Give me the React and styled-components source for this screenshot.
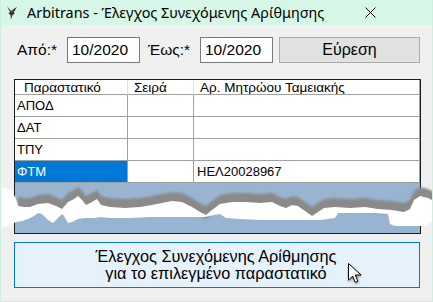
import React from "react";
import styled, { createGlobalStyle } from "styled-components";

const Global = createGlobalStyle`
  html, body { margin: 0; padding: 0; background: #f0f0f0; }
  body { width: 433px; height: 302px; overflow: hidden; }
  * { box-sizing: border-box; }
`;

const Window = styled.div`
  position: relative;
  width: 433px;
  height: 302px;
  background: #f0f0f0;
  border-left: 1px solid #c9f1dd;
  border-right: 1px solid #c9f1dd;
  border-bottom: 1px solid #c9f1dd;
  display: flex;
  flex-direction: column;
  overflow: hidden;
  font-family: "Liberation Sans", Arial, sans-serif;
  color: #000;
`;

const TitleBar = styled.div`
  height: 25px;
  flex: none;
  background: #d6f7e7;
  display: flex;
  align-items: center;
  padding-left: 6px;
`;

const TitleText = styled.span`
  margin-left: 9px;
  flex: 1;
  font-family: "Noto Sans", sans-serif;
  font-size: 14.4px;
  white-space: nowrap;
`;

const CloseIcon = styled.svg`
  flex: none;
  margin-right: 56px;
`;

const Body = styled.div`
  padding: 0 11px 0 13px;
  display: flex;
  flex-direction: column;
`;

const FilterRow = styled.div`
  margin-top: 12px;
  height: 26px;
  display: flex;
  align-items: center;
`;

const Label = styled.span`
  width: ${(p) => p.$w}px;
  margin-left: ${(p) => p.$ml}px;
  font-size: 15.5px;
  white-space: nowrap;
`;

const DateBox = styled.div`
  width: 73px;
  height: 26px;
  border: 1px solid #7a7a7a;
  background: #fff;
  font-size: 15.5px;
  padding-left: 4px;
  display: flex;
  align-items: center;
`;

const SearchButton = styled.div`
  margin-left: 6px;
  width: 141px;
  height: 26px;
  background: #e1e1e1;
  border: 1px solid #adadad;
  font-size: 16px;
  display: flex;
  align-items: center;
  justify-content: center;
`;

const Grid = styled.div`
  margin-top: 16px;
  width: 407px;
  height: 155px;
  border: 1px solid #1c1c1c;
  background: #99b4d1;
  display: flex;
  flex-direction: column;
`;

const GridRow = styled.div`
  display: grid;
  grid-template-columns: 113px 66px 226px;
  height: ${(p) => (p.$header ? 15 : 22)}px;
  background: #fff;
  font-size: 13.5px;
`;

const HeadCell = styled.div`
  border-right: 1px solid #e3e3e3;
  border-bottom: 1px solid #a0a0a0;
  padding-left: ${(p) => p.$pl}px;
  display: flex;
  align-items: center;
  white-space: nowrap;
  overflow: hidden;
  &:last-child { border-right-color: #a0a0a0; }
`;

const Cell = styled.div`
  border-right: 1px solid #a0a0a0;
  border-bottom: 1px solid #a0a0a0;
  padding-left: ${(p) => p.$pl}px;
  display: flex;
  align-items: center;
  white-space: nowrap;
  font-size: 13px;
  background: ${(p) => (p.$sel ? "#0078d7" : "#fff")};
  color: ${(p) => (p.$sel ? "#fff" : "#000")};
`;

const CheckButton = styled.div`
  margin-top: 8px;
  width: 406px;
  height: 46px;
  background: #e5f1fb;
  border: 1px solid #0078d7;
  font-size: 16.3px;
  line-height: 17px;
  text-align: center;
  display: flex;
  flex-direction: column;
  align-items: center;
  justify-content: center;
  padding-right: 2px;
`;

const TearOverlay = styled.svg`
  position: absolute;
  left: -1px;
  top: 0;
  pointer-events: none;
`;

const CursorOverlay = styled.svg`
  position: absolute;
  left: 343px;
  top: 260px;
  pointer-events: none;
`;

const rows = [
  { a: "ΑΠΟΔ", b: "", c: "" },
  { a: "ΔΑΤ", b: "", c: "" },
  { a: "ΤΠΥ", b: "", c: "" },
  { a: "ΦΤΜ", b: "", c: "ΗΕΛ20028967", sel: true },
];

const top = [
  [18, 197], [24, 198], [30, 198], [38, 195], [48, 194], [56, 197], [62, 200], [68, 193],
  [74, 190], [78, 187], [82, 191], [86, 196], [92, 193], [97, 190], [101, 196], [110, 198],
  [125, 199], [140, 198], [152, 196], [162, 194], [172, 192], [182, 193], [192, 198],
  [200, 203], [206, 206], [212, 201], [220, 195], [232, 193], [246, 193], [260, 194],
  [272, 193], [280, 197], [286, 199], [292, 196], [298, 197], [305, 202], [312, 207],
  [318, 203], [324, 199], [335, 198], [350, 199], [365, 198], [378, 200], [392, 201],
  [404, 203], [410, 200], [414, 191], [420, 187], [428, 189], [434, 192],
];

const bottom = [
  [434, 220], [425, 226], [410, 226], [395, 226], [390, 224], [388, 214], [375, 213],
  [360, 213], [345, 213], [338, 213], [335, 218], [320, 220], [300, 220], [280, 220],
  [260, 220], [240, 219], [226, 218], [220, 214], [214, 215], [205, 217], [190, 217],
  [170, 217], [150, 217], [130, 218], [110, 218], [100, 217], [95, 218], [85, 218],
  [78, 219], [72, 222], [68, 223], [64, 216], [62, 214], [58, 218], [53, 223], [48, 220],
  [42, 214], [38, 213], [34, 216], [28, 219], [22, 221], [16, 222], [12, 224], [6, 226],
  [0, 227],
];

const pts = (arr, dy = 0) => arr.map(([x, y]) => `${x},${y + dy}`).join(" L");

const greyPath = `M${pts(top)} L${pts([...top].reverse(), 13)} Z`;
const whitePath = `M0,187 L6,188 L12,191 L16,199 L${pts(top, 9)} L${pts(bottom)} Z`;

export default function App() {
  return (
    <>
      <Global />
      <Window>
        <TitleBar>
          <svg width="11" height="14" viewBox="0 0 11 14">
            <path
              d="M0,0 L4,5 L5,4 L10,1 L7,6 L7.5,8 L5.5,9 L4,13.5 L3.5,9 L1.5,7.5 L3,6 Z"
              fill="#3f3430"
            />
            <path d="M4,5 L5,4 L6.5,5 L5,6 Z" fill="#8a7a6a" />
          </svg>
          <TitleText>Arbitrans - Έλεγχος Συνεχόμενης Αρίθμησης</TitleText>
          <CloseIcon width="11" height="11" viewBox="0 0 11 11">
            <path d="M0.5,0.5 L10.5,10.5 M10.5,0.5 L0.5,10.5" stroke="#000" strokeWidth="1" />
          </CloseIcon>
        </TitleBar>
        <Body>
          <FilterRow>
            <Label $w={50} $ml={3}>Από:*</Label>
            <DateBox>10/2020</DateBox>
            <Label $w={52} $ml={8}>Έως:*</Label>
            <DateBox>10/2020</DateBox>
            <SearchButton>Εύρεση</SearchButton>
          </FilterRow>
          <Grid>
            <GridRow $header>
              <HeadCell $pl={9}>Παραστατικό</HeadCell>
              <HeadCell $pl={6}>Σειρά</HeadCell>
              <HeadCell $pl={6}>Αρ. Μητρώου Ταμειακής</HeadCell>
            </GridRow>
            {rows.map((r) => (
              <GridRow key={r.a}>
                <Cell $pl={2} $sel={r.sel}>{r.a}</Cell>
                <Cell $pl={3}>{r.b}</Cell>
                <Cell $pl={3}>{r.c}</Cell>
              </GridRow>
            ))}
          </Grid>
          <CheckButton>
            <span>Έλεγχος Συνεχόμενης Αρίθμησης</span>
            <span>για το επιλεγμένο παραστατικό</span>
          </CheckButton>
        </Body>
        <TearOverlay width="435" height="302" viewBox="0 0 435 302">
          <defs>
            <filter id="shadowBlur" x="-5%" y="-50%" width="110%" height="200%">
              <feGaussianBlur stdDeviation="1" />
            </filter>
            <filter id="edgeBlur" x="-5%" y="-50%" width="110%" height="200%">
              <feGaussianBlur stdDeviation="0.6" />
            </filter>
          </defs>
          <path d={greyPath} fill="#8a8a8a" filter="url(#shadowBlur)" />
          <path d={whitePath} fill="#ffffff" filter="url(#edgeBlur)" />
        </TearOverlay>
        <CursorOverlay width="24" height="28" viewBox="0 0 24 28">
          <defs>
            <filter id="curShadow" x="-50%" y="-50%" width="200%" height="200%">
              <feGaussianBlur stdDeviation="1.5" />
            </filter>
          </defs>
          <path
            d="M5,5 L5,21.8 L9.2,17.6 L11.8,23.8 L14.4,22.7 L11.8,16.5 L17.6,16.5 Z"
            fill="rgba(0,0,0,0.55)"
            filter="url(#curShadow)"
          />
          <path
            d="M4.5,3.5 L4.5,20.3 L8.7,16.1 L11.3,22.3 L13.9,21.2 L11.3,15 L17.1,15 Z"
            fill="#fff"
            stroke="#000"
            strokeWidth="1"
            strokeLinejoin="miter"
          />
        </CursorOverlay>
      </Window>
    </>
  );
}
